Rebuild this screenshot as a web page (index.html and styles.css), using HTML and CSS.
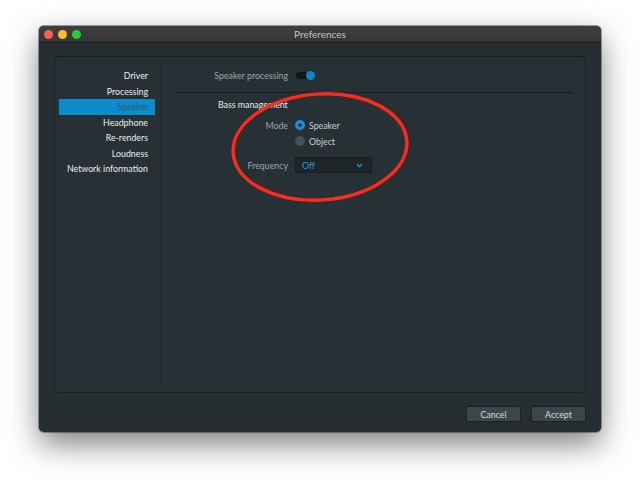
FILE: index.html
```html
<!DOCTYPE html>
<html lang="en">
<head>
  <meta charset="UTF-8">
  <title>Preferences</title>
  <link rel="stylesheet" href="styles.css">
</head>
<body>
  <div class="page">
    <div class="window">
      <!-- title bar -->
      <div class="titlebar">
        <div class="lights">
          <span class="light red"></span>
          <span class="light yellow"></span>
          <span class="light green"></span>
        </div>
        <div class="title">Preferences</div>
        <div></div>
      </div>

      <div class="window-body">
        <div class="panel">
          <!-- sidebar -->
          <div class="sidebar">
            <div class="nav-item">Driver</div>
            <div class="nav-item">Processing</div>
            <div class="nav-item active">Speaker</div>
            <div class="nav-item">Headphone</div>
            <div class="nav-item">Re-renders</div>
            <div class="nav-item">Loudness</div>
            <div class="nav-item">Network information</div>
          </div>

          <!-- speaker page -->
          <div class="content">
            <div class="form-row top-row">
              <div class="label">Speaker processing</div>
              <div class="toggle"><span class="knob"></span></div>
            </div>
            <div class="separator"></div>
            <div class="section-title">Bass management</div>
            <div class="form">
              <div class="label">Mode</div>
              <label class="radio"><span class="dot on"></span>Speaker</label>
              <div></div>
              <label class="radio"><span class="dot"></span>Object</label>
            </div>
            <div class="form-row freq-row">
              <div class="label">Frequency</div>
              <div class="select">
                <span>Off</span>
                <svg width="7" height="5" viewBox="0 0 7 5"><path d="M0.8 1 L3.5 3.7 L6.2 1" fill="none" stroke="#2a9ad8" stroke-width="1.2"/></svg>
              </div>
            </div>
          </div>
        </div>

        <div class="footer">
          <button class="btn">Cancel</button>
          <button class="btn">Accept</button>
        </div>
      </div>

      <!-- hand drawn annotation -->
      <svg class="annotation" width="200" height="130" viewBox="0 0 200 130">
        <ellipse cx="100" cy="65" rx="87" ry="53" transform="rotate(-4 100 65)" fill="none" stroke="#ff2a1a" stroke-width="3.5"/>
      </svg>
    </div>
  </div>
</body>
</html>
```

FILE: styles.css
```css
* {
  margin: 0;
  padding: 0;
  box-sizing: border-box;
}

body {
  background-color: #fff;
  font-family: Lato, "Open Sans", sans-serif;
  font-size: 8.8px;
  min-height: 100vh;
}

.page {
  padding: 26px 0 0 39px;
  min-height: 484px;
}

/* window */
.window {
  position: relative;
  width: 562px;
  height: 406px;
  background-color: #262e32;
  border-radius: 5px;
  box-shadow: 0 12px 30px rgba(0, 0, 0, 0.5), 0 0 0 1px rgba(0, 0, 0, 0.35);
  display: flex;
  flex-direction: column;
}

.titlebar {
  height: 17px;
  display: grid;
  grid-template-columns: 1fr auto 1fr;
  align-items: center;
  background: linear-gradient(#3f3f3f, #353535);
  border-bottom: 1px solid #1c1c1c;
  border-radius: 5px 5px 0 0;
}

.lights {
  display: flex;
  gap: 5px;
  padding-left: 5px;
}

.light {
  width: 9px;
  height: 9px;
  border-radius: 50%;
}

.light.red { background-color: #fc5b57; }
.light.yellow { background-color: #fdbb2e; }
.light.green { background-color: #29c940; }

.title {
  color: #c4c4c4;
  font-size: 10px;
}

.window-body {
  flex: 1;
  padding: 13px 15px 0 15px;
  display: flex;
  flex-direction: column;
}

.panel {
  height: 337px;
  border: 1px solid #1a2023;
  border-radius: 3px;
  background-color: #273034;
  display: flex;
}

/* sidebar */
.sidebar {
  width: 107px;
  margin: 5px 0;
  padding: 6px 6px 0 4px;
  border-right: 1px solid #1b2124;
}

.nav-item {
  height: 15.5px;
  line-height: 15.5px;
  text-align: right;
  padding-right: 7px;
  color: #eceeef;
}

.nav-item.active {
  background-color: #0e8bcb;
  color: #245a7c;
}

/* content */
.content {
  flex: 1;
  padding: 10px 12px 0 13px;
}

.form-row,
.form {
  display: grid;
  grid-template-columns: 113px 1fr;
  column-gap: 7px;
  align-items: center;
}

.top-row {
  height: 16px;
}

.label {
  text-align: right;
  color: #9ea6aa;
}

.toggle {
  position: relative;
  width: 18px;
  height: 7px;
  margin-left: 1px;
  background-color: #131618;
  border-radius: 4px;
}

.toggle .knob {
  position: absolute;
  right: -1px;
  top: -1px;
  width: 9px;
  height: 9px;
  border-radius: 50%;
  background-color: #1584c4;
}

.separator {
  margin-top: 9px;
  height: 1px;
  background-color: #161b1d;
}

.section-title {
  margin-top: 6px;
  height: 12px;
  line-height: 12px;
  padding-left: 43px;
  color: #eceeef;
}

.form {
  margin-top: 6px;
  grid-auto-rows: 16px;
}

.radio {
  display: flex;
  align-items: center;
  gap: 4px;
  color: #c9cfd2;
}

.dot {
  width: 10px;
  height: 10px;
  border-radius: 50%;
  background-color: #465055;
}

.dot.on {
  background-color: #1a90d4;
  border: 3px solid #1a90d4;
  box-shadow: inset 0 0 0 4px #15303f;
}

.freq-row {
  margin-top: 8px;
  height: 16px;
}

.select {
  width: 77px;
  height: 16px;
  background-color: #1f2629;
  border: 1px solid #181d1f;
  display: flex;
  align-items: center;
  justify-content: space-between;
  padding: 0 8px 0 6px;
  color: #2a9ad8;
}

/* footer */
.footer {
  display: flex;
  justify-content: flex-end;
  gap: 10px;
  padding-top: 13px;
}

.btn {
  width: 55px;
  height: 16px;
  background-color: #3b464b;
  border: 1px solid #1b2124;
  border-radius: 2px;
  color: #d6dcdf;
  font-family: Lato, "Open Sans", sans-serif;
  font-size: 8.8px;
}

.annotation {
  position: absolute;
  left: 181px;
  top: 56px;
}
```
